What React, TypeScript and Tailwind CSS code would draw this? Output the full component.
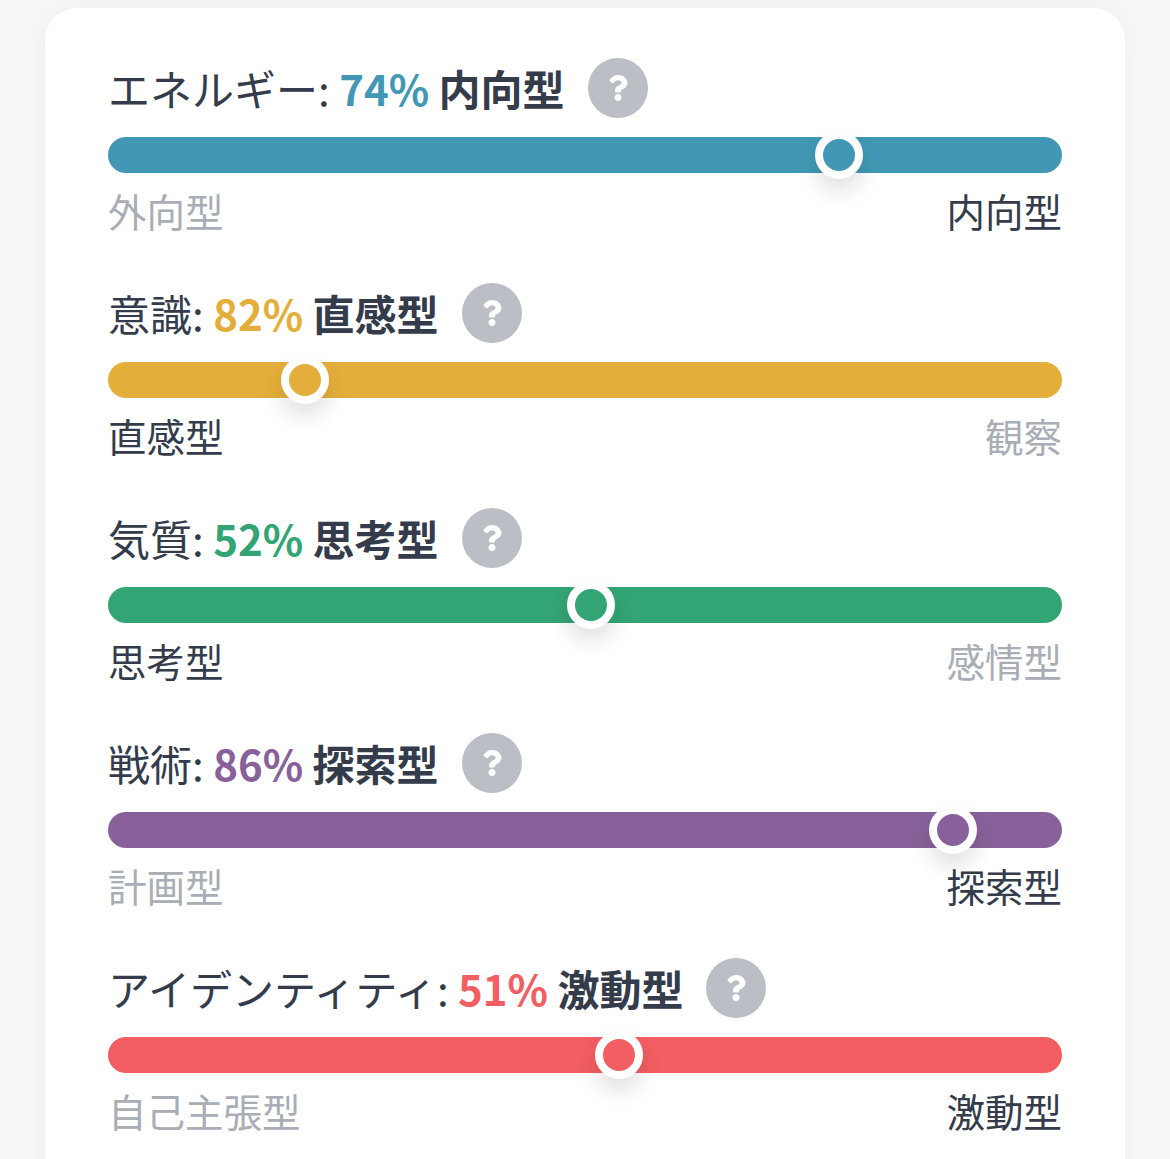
import React from 'react';
import { FaQuestion } from 'react-icons/fa';

type Trait = {
  name: string;
  percent: number;
  type: string;
  color: string;
  textColor: string;
  left: string;
  right: string;
  leftActive: boolean;
  pos: number;
};

const traits: Trait[] = [
  { name: 'エネルギー', percent: 74, type: '内向型', color: 'bg-[#4298b4]', textColor: 'text-[#4298b4]', left: '外向型', right: '内向型', leftActive: false, pos: 76.6 },
  { name: '意識', percent: 82, type: '直感型', color: 'bg-[#e4ae3a]', textColor: 'text-[#e4ae3a]', left: '直感型', right: '観察', leftActive: true, pos: 20.6 },
  { name: '気質', percent: 52, type: '思考型', color: 'bg-[#33a474]', textColor: 'text-[#33a474]', left: '思考型', right: '感情型', leftActive: true, pos: 50.6 },
  { name: '戦術', percent: 86, type: '探索型', color: 'bg-[#88619a]', textColor: 'text-[#88619a]', left: '計画型', right: '探索型', leftActive: false, pos: 88.6 },
  { name: 'アイデンティティ', percent: 51, type: '激動型', color: 'bg-[#f25e62]', textColor: 'text-[#f25e62]', left: '自己主張型', right: '激動型', leftActive: false, pos: 53.6 },
];

const TraitRow: React.FC<{ trait: Trait }> = ({ trait }) => {
  const active = 'text-[#343c4b]';
  const muted = 'text-[#a9adb5]';
  return (
    <div className="mb-[50px]">
      <div className="flex items-center h-[60px]">
        <span className="text-[42px] leading-none text-[#343c4b]">
          {trait.name}:{' '}
          <span className={`font-bold ${trait.textColor}`}>{trait.percent}%</span>{' '}
          <span className="font-bold">{trait.type}</span>
        </span>
        <span className="ml-[23px] w-[60px] h-[60px] rounded-full bg-[#bbbfc5] flex items-center justify-center text-white">
          <FaQuestion size={26} />
        </span>
      </div>
      <div className={`relative mt-[19px] h-[36px] rounded-full ${trait.color}`}>
        <div
          className={`absolute top-1/2 w-[48px] h-[48px] -translate-x-1/2 -translate-y-1/2 rounded-full border-[8px] border-white ${trait.color} shadow-[0_12px_22px_rgba(0,0,0,0.12)]`}
          style={{ left: `${trait.pos}%` }}
        />
      </div>
      <div className="mt-[14px] flex justify-between text-[38.5px] leading-[46px]">
        <span className={trait.leftActive ? active : muted}>{trait.left}</span>
        <span className={trait.leftActive ? muted : active}>{trait.right}</span>
      </div>
    </div>
  );
};

export default function App() {
  return (
    <div
      className="min-h-screen bg-[#f7f7f8] pt-[8px] px-[45px] overflow-hidden"
      style={{ fontFamily: '"Noto Sans CJK JP", "Noto Sans", sans-serif' }}
    >
      <div className="bg-white rounded-[32px] shadow-[0_0_30px_rgba(0,0,0,0.04)] pt-[50px] px-[63px] pb-[20px]">
        {traits.map((t) => (
          <TraitRow key={t.name} trait={t} />
        ))}
      </div>
    </div>
  );
}
